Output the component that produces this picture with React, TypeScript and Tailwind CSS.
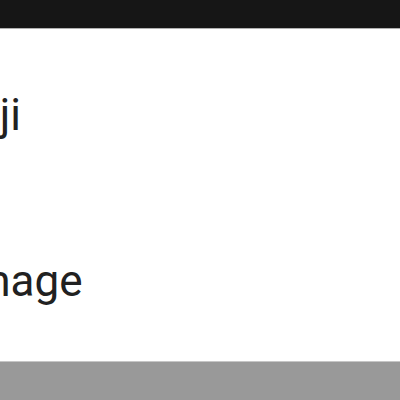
import React from 'react';

const items = [
  { label: 'Emoji', offset: 'ml-[-89px]' },
  { label: 'Image', offset: 'ml-[-40px]' },
];

const App = () => {
  return (
    <div
      className="w-[400px] h-[400px] flex flex-col overflow-hidden bg-white"
      style={{ fontFamily: 'Roboto, "Noto Sans", sans-serif' }}
    >
      {/* top bar */}
      <div className="h-[29px] shrink-0 bg-[#161616] border-b border-[#b0b0b0]" />

      {/* menu list, scrolled sideways */}
      <div className="flex-1 flex flex-col">
        {items.map((item) => (
          <div key={item.label} className="flex-1 flex items-center pt-[6px]">
            <span className={`${item.offset} text-[44px] leading-none text-[#212121] whitespace-nowrap`}>
              {item.label}
            </span>
          </div>
        ))}
      </div>

      {/* bottom bar */}
      <div className="h-[39px] shrink-0 bg-[#999999] border-t border-[#c6c6c6]" />
    </div>
  );
};

export default App;
